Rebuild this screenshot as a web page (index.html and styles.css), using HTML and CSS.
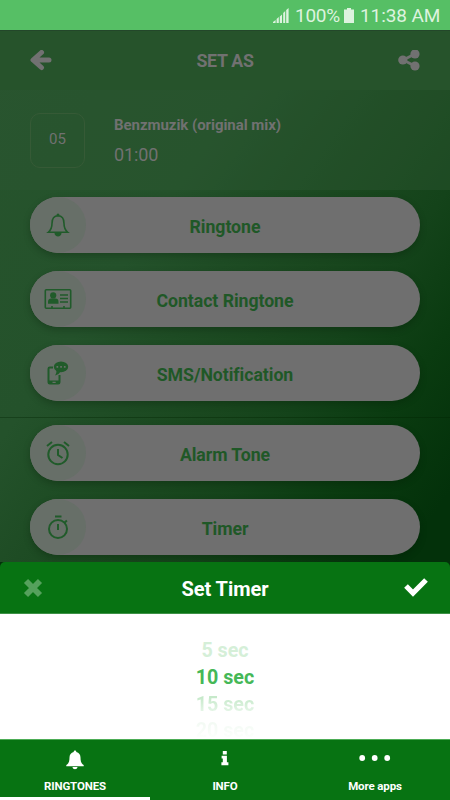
FILE: index.html
```html
<!DOCTYPE html>
<html lang="en">
<head>
    <meta charset="UTF-8">
    <meta name="viewport" content="width=device-width, initial-scale=1.0">
    <title>Set As</title>

    <link rel="stylesheet" href="styles.css">
</head>
<body>
    <div class="status-bar">
        <svg class="signal" width="16" height="15" viewBox="0 0 16 15">
            <path d="M0 15V14L2.600 12V15zM3.600 15V11L5.800 9V15zM6.800 15V8.400L9 6.400V15zM10.200 15V5L12.200 3V15zM13.200 15V2L15.600 0V15z"/>
        </svg>
        <span class="percent">100%</span>
        <svg class="battery" width="10" height="15" viewBox="0 0 10 15">
            <path d="M3 0h4v1.500h3V15H0V1.500h3z"/>
        </svg>
        <span class="clock">11:38 AM</span>
    </div>

    <div class="screen">
        <header class="header">
            <svg width="22" height="22" viewBox="0 0 22 22">
                <path d="M11.500 2.500L3 10l8.500 7.500M4 10h15" fill="none" stroke="currentColor" stroke-width="5" stroke-linecap="round" stroke-linejoin="round"/>
            </svg>
            <h1>SET AS</h1>
            <svg width="22" height="22" viewBox="0 0 22 22">
                <path d="M17 4L5 10l12 6" fill="none" stroke="currentColor" stroke-width="2.700"/>
                <circle cx="4.800" cy="10" r="4.600"/>
                <circle cx="17" cy="4" r="4.600"/>
                <circle cx="17" cy="16" r="4.600"/>
            </svg>
        </header>

        <section class="track">
            <div class="track-number">05</div>
            <div class="track-info">
                <h2>Benzmuzik (original mix)</h2>
                <p>01:00</p>
            </div>
        </section>

        <div class="options">
            <button type="button" class="option">
                <span class="option-icon">
                    <svg width="24" height="24" viewBox="0 0 24 24">
                        <path class="line" d="M2.300 19.300C5 17 6 14.500 6 10.500C6 5.800 8 2.700 12 2.700s6 3.100 6 7.800c0 4 1 6.500 3.700 8.800z"/>
                        <circle cx="12" cy="2" r="1.500"/>
                        <path d="M8.500 20h7c0 4.500-7 4.500-7 0z"/>
                    </svg>
                </span>
                <span class="option-label">Ringtone</span>
            </button>
            <button type="button" class="option">
                <span class="option-icon">
                    <svg width="28" height="22" viewBox="0 0 28 22">
                        <rect class="line" x="1.300" y="1.800" width="25.400" height="18.400" rx="1"/>
                        <circle cx="9.200" cy="7.400" r="3.100"/>
                        <path d="M4 15.800v-2c0-2.500 1.500-3.300 3-3.300h4.500c1.800 0 3 1 3 3.300v2z"/>
                        <path class="line" d="M16 7h8M16 10.500h8M16 14h8M8 18v2M20 18v2"/>
                    </svg>
                </span>
                <span class="option-label">Contact Ringtone</span>
            </button>
            <button type="button" class="option">
                <span class="option-icon">
                    <svg width="24" height="26" viewBox="0 0 24 26">
                        <path class="line thick" d="M7 7.500H3.800q-1.300 0-1.300 1.300v13.400q0 1.300 1.300 1.300h8.400q1.300 0 1.300-1.300V15"/>
                        <path d="M2 20.500h12V24H2z"/>
                        <ellipse cx="15" cy="6.800" rx="7.200" ry="5.400"/>
                        <path d="M10 9.500c.8 2.500.3 4-1 6 3-.8 4.500-2 5.500-4z"/>
                        <path class="cutout" d="M10.500 6h1.700v1.700h-1.700zM14.200 6h1.700v1.700h-1.700zM17.900 6h1.700v1.700h-1.700zM6.500 21.800h3.200V23H6.500z"/>
                    </svg>
                </span>
                <span class="option-label">SMS/Notification</span>
            </button>
            <hr class="divider">
            <button type="button" class="option">
                <span class="option-icon">
                    <svg width="26" height="26" viewBox="0 0 26 26">
                        <circle class="line thick" cx="13" cy="14.500" r="9.700"/>
                        <path class="line thick" d="M2 6l5-4M24 6l-5-4M13 9v6l4.500 3"/>
                    </svg>
                </span>
                <span class="option-label">Alarm Tone</span>
            </button>
            <button type="button" class="option">
                <span class="option-icon">
                    <svg width="24" height="26" viewBox="0 0 24 26">
                        <circle class="line thick" cx="12" cy="15" r="9"/>
                        <path class="line thick" d="M9 2.500h6.500M12 10v6M18.200 9l2.700-2.500"/>
                    </svg>
                </span>
                <span class="option-label">Timer</span>
            </button>
        </div>
    </div>

    <div class="timer-sheet">
        <div class="sheet-header">
            <svg class="cancel" width="20" height="20" viewBox="0 0 20 20">
                <path d="M3 3l14 14M17 3l-14 14" stroke="currentColor" stroke-width="5.800"/>
            </svg>
            <h3>Set Timer</h3>
            <svg width="24" height="20" viewBox="0 0 24 20">
                <path d="M2 8l7 7L22 2" fill="none" stroke="currentColor" stroke-width="5.200"/>
            </svg>
        </div>
        <ul class="picker">
            <li>5 sec</li>
            <li class="selected">10 sec</li>
            <li class="next">15 sec</li>
            <li class="last">20 sec</li>
        </ul>
    </div>

    <nav class="tabs">
        <a class="tab active" href="#">
            <svg width="18" height="20" viewBox="0 0 18 20">
                <path d="M9 .5c.9 0 1.300.6 1.300 1.400C13 2.500 14.500 4.600 14.500 7.500c0 4 1 6.500 3.200 7.500v1.200H.3V15c2.200-1 3.200-3.500 3.200-7.500 0-2.900 1.500-5 4.200-5.600C7.700 1.100 8.100.5 9 .5zM6.500 17h5c-.3 3-4.700 3-5 0z"/>
            </svg>
            <span>RINGTONES</span>
        </a>
        <a class="tab" href="#">
            <svg width="8" height="20" viewBox="0 0 8 20">
                <path d="M1.800 1h4v3.400h-4zM.6 5.800h5.300v6.500h1.500v3H.4v-3h1.400V8.600H.6z"/>
            </svg>
            <span>INFO</span>
        </a>
        <a class="tab" href="#">
            <svg width="32" height="20" viewBox="0 0 32 20">
                <circle cx="3.200" cy="8" r="2.900"/>
                <circle cx="15.700" cy="8" r="2.900"/>
                <circle cx="28.200" cy="8" r="2.900"/>
            </svg>
            <span>More apps</span>
        </a>
    </nav>
</body>
</html>
```
FILE: styles.css
```css
* {
    margin: 0;
    padding: 0;
    box-sizing: border-box;
    font-family: Roboto, sans-serif;
}
body {
    width: 450px;
    height: 800px;
    display: flex;
    flex-direction: column;
    overflow: hidden;
    background: #03310a;
}
svg {
    display: block;
    fill: currentColor;
}
.status-bar {
    height: 30px;
    flex: none;
    display: flex;
    align-items: center;
    justify-content: flex-end;
    padding-right: 10px;
    background: #56bf65;
    color: #ddf3df;
    font-size: 19px;
}
.percent {
    margin-left: 6px;
    width: 45px;
    letter-spacing: -0.300px;
}
.battery {
    margin: 0 6px 0 4px;
}
.clock {
    width: 80px;
    white-space: nowrap;
    letter-spacing: -0.100px;
}
.screen {
    height: 532px;
    flex: none;
    color: #717171;
    background: linear-gradient(125deg, #27542d 0%, #24522b 35%, #1e4c24 47%, #19471e 59%, #14431a 68%, #0a3b10 80%, #03310a 94%);
}
.header {
    height: 60px;
    display: flex;
    align-items: center;
    justify-content: space-between;
    padding: 0 30px;
    background: #26532b;
    border-top: 1px solid #23472a;
}
.header h1 {
    font-size: 17.800px;
    font-weight: 700;
    letter-spacing: -0.300px;
}
.track {
    height: 100px;
    display: flex;
    align-items: center;
    padding: 0 30px;
    background: rgba(45, 88, 51, 0.400);
}
.track-number {
    width: 55px;
    height: 55px;
    display: flex;
    align-items: center;
    justify-content: center;
    padding-bottom: 2px;
    border: 1px solid #365a36;
    border-radius: 10px;
    font-size: 15px;
}
.track-info {
    margin-left: 29px;
}
.track-info h2 {
    font-size: 15px;
    line-height: 20px;
    font-weight: 700;
    letter-spacing: -0.050px;
}
.track-info p {
    margin-top: 9px;
    font-size: 18px;
    line-height: 22px;
    letter-spacing: -0.100px;
}
.options {
    display: flex;
    flex-direction: column;
    align-items: center;
    gap: 18.400px;
    padding-top: 6.500px;
}
.option {
    width: 390px;
    height: 56px;
    flex: none;
    display: grid;
    grid-template-columns: 56px 1fr 56px;
    align-items: center;
    border: none;
    border-radius: 28px;
    background: #6f6f6f;
    color: #1f5827;
    box-shadow: 0 3px 7px rgba(0, 20, 0, 0.250);
}
.option-icon {
    width: 56px;
    height: 56px;
    display: flex;
    align-items: center;
    justify-content: center;
    border-radius: 50%;
    background: #676f68;
    color: #205b2a;
}
.option-label {
    padding-top: 4px;
    font-size: 17.700px;
    font-weight: 700;
    text-align: center;
    letter-spacing: -0.050px;
}
.line {
    fill: none;
    stroke: currentColor;
    stroke-width: 1.600;
}
.thick {
    stroke-width: 2;
}
.cutout {
    fill: #676f68;
}
.divider {
    width: 100%;
    height: 1px;
    margin: -3px 0 -11.500px;
    border: none;
    background: rgba(0, 35, 0, 0.350);
}
.timer-sheet {
    height: 177px;
    flex: none;
}
.sheet-header {
    height: 52px;
    display: flex;
    align-items: center;
    justify-content: space-between;
    padding: 0 22px 0 23px;
    background: #077312;
    border-radius: 5px 5px 0 0;
    border-bottom: 1px solid #3d9146;
    color: #fff;
}
.sheet-header h3 {
    font-size: 20px;
    font-weight: 700;
    padding: 2px 0 0 3px;
    letter-spacing: -0.050px;
}
.cancel {
    color: #55a15c;
}
.picker {
    height: 125px;
    padding-top: 24px;
    background: #fff;
    list-style: none;
    text-align: center;
    font-size: 19.700px;
    line-height: 26.900px;
    font-weight: 700;
    color: #d5efd8;
}
.picker .selected {
    color: #45b857;
}
.picker .next {
    color: transparent;
    background: linear-gradient(#c6e9ca 20%, #e9f7eb 80%);
    background-clip: text;
}
.picker .last {
    line-height: 24px;
    color: transparent;
    background: linear-gradient(#f3faf4 20%, #fdfffd 80%);
    background-clip: text;
}
.tabs {
    height: 61px;
    flex: none;
    display: grid;
    grid-template-columns: repeat(3, 1fr);
    background: #077312;
    border-top: 1px solid #4dad56;
}
.tab {
    display: flex;
    flex-direction: column;
    align-items: center;
    padding-top: 10px;
    color: #fff;
    font-size: 11.500px;
    font-weight: bold;
    letter-spacing: -0.120px;
    text-decoration: none;
    border-bottom: 3px solid transparent;
}
.tab span {
    margin-top: 9px;
    line-height: 14px;
}
.tab.active {
    border-bottom-color: #fff;
}
```
